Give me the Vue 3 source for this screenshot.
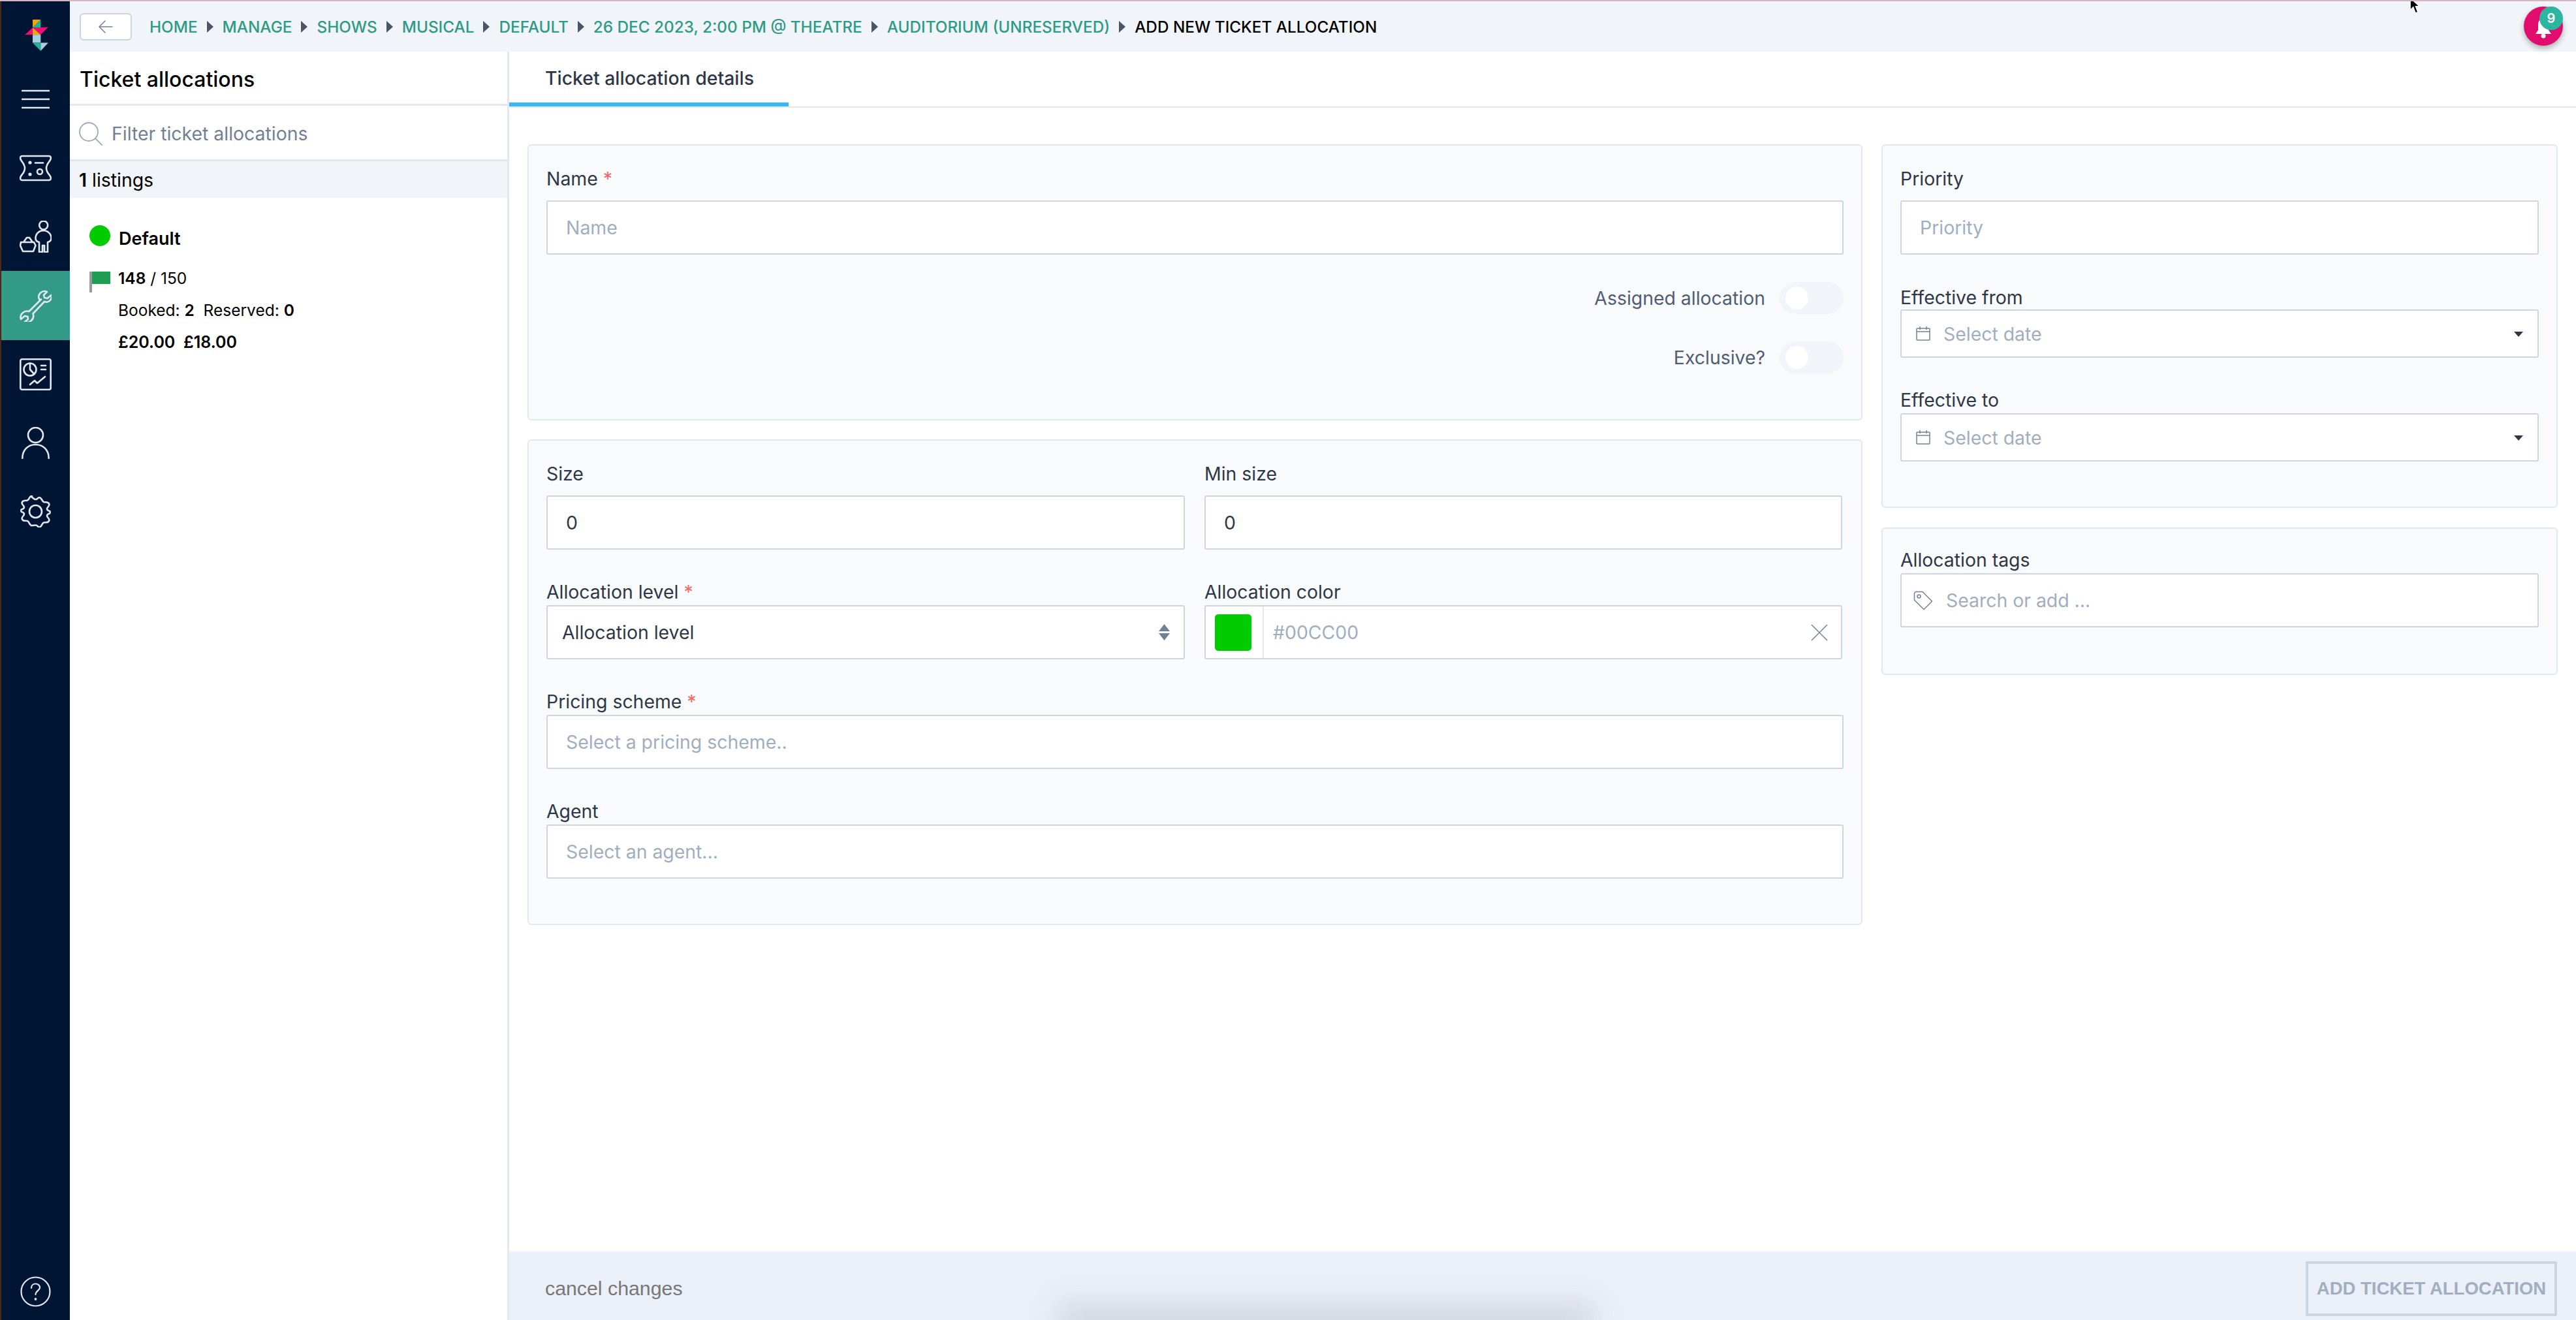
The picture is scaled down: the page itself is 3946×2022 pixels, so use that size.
<script setup>
const crumbs = ['Home', 'Manage', 'Shows', 'Musical', 'Default', '26 Dec 2023, 2:00 PM @ Theatre', 'Auditorium (Unreserved)']
</script>

<template>
  <div class="app">
    <aside class="rail">
      <svg class="logo" viewBox="110 90 108 145">
        <polygon points="146,90 183,90 146,127" fill="#f6a609" />
        <polygon points="183,90 183,127 146,127" fill="#1eb49a" />
        <polygon points="110,160 146,127 146,160" fill="#ef0f73" />
        <polygon points="146,127 218,125 183,160" fill="#ef0f73" />
        <polygon points="146,127 183,160 146,160" fill="#f6a609" />
        <polygon points="146,160 183,160 183,197 146,197" fill="#a7cfe2" />
        <polygon points="146,197 183,197 183,235" fill="#1eb49a" />
        <polygon points="183,197 218,197 183,235" fill="#a7cfe2" />
      </svg>
      <svg class="burger" viewBox="0 0 43 30" fill="none" stroke="#e2e8f0" stroke-width="2.6" stroke-linecap="round">
        <path d="M1 2h41M1 15h41M1 28h41" />
      </svg>
      <div class="nav">
        <div class="nav-item">
          <svg class="ico" viewBox="0 0 49 49" fill="none" stroke="#e2e8f0" stroke-width="2.6" stroke-linecap="round" stroke-linejoin="round">
            <path d="M4 6h41a3 3 0 0 1 3 3c0 5-7 7-7 15.500s7 10.500 7 15.500a3 3 0 0 1-3 3H4a3 3 0 0 1-3-3c0-5 7-7 7-15.500S1 14 1 9a3 3 0 0 1 3-3z" />
            <circle cx="16" cy="16" r="1.300" fill="#e2e8f0" />
            <circle cx="16" cy="34" r="1.300" fill="#e2e8f0" />
            <path d="M24 16.500h12" />
            <circle cx="31" cy="30" r="4" />
          </svg>
        </div>
        <div class="nav-item">
          <svg class="ico" viewBox="0 0 49 49" fill="none" stroke="#e2e8f0" stroke-width="2.6" stroke-linecap="round" stroke-linejoin="round">
            <circle cx="36.700" cy="7" r="6.500" />
            <path d="M36.700 15C30 15 24.500 20 24.500 27c0 3 1.500 5 5.500 6v15h5V38h3v10h5V33c4-1 5.500-3 5.500-6 0-7-5.500-12-12.800-12z" />
            <path d="M2 33h20l2.500 5-3.500 9H5L1 38zM6 33l5-7h4l5 7" />
          </svg>
        </div>
        <div class="nav-item active">
          <svg class="ico" viewBox="0 0 49 49" fill="none" stroke="#e2e8f0" stroke-width="2.6" stroke-linecap="round" stroke-linejoin="round">
            <path d="M33 14.500 14.500 33c-4-1.500-9 .500-11.500 4-1.500 2.500-2 5-1 8l6-5 4.500 1 .5 4-5 4c3 1.500 7 .500 10-2 3-3 4-7 2.500-10.500L38 18c4 1.500 8 0 10-3.500 1-2 1-4.500.5-6.500l-6 5-4.500-1-1-4 5-5c-3-1.500-7-1-10 1.500-3 3-3.500 7-1.500 10.500z" />
          </svg>
        </div>
        <div class="nav-item">
          <svg class="ico" viewBox="0 0 49 49" fill="none" stroke="#e2e8f0" stroke-width="2.6" stroke-linecap="round" stroke-linejoin="round">
            <rect x="1.300" y="1.300" width="46.400" height="46.400" rx="2.500" />
            <circle cx="16" cy="17" r="9.500" />
            <path d="M16 7.500V17l6 6.500M33 11h7M33 17h7M16 40l7-6 4 4 12-10" />
          </svg>
        </div>
        <div class="nav-item">
          <svg class="ico-u" viewBox="0 0 43 49" fill="none" stroke="#e2e8f0" stroke-width="2.6" stroke-linecap="round">
            <circle cx="21.500" cy="12.500" r="11.500" />
            <path d="M1.300 48C1.300 35 10 27 21.500 27S41.700 35 41.700 48" />
          </svg>
        </div>
        <div class="nav-item">
          <svg class="ico" viewBox="0 0 49 49" fill="none" stroke="#e2e8f0" stroke-width="2.6" stroke-linecap="round" stroke-linejoin="round">
            <circle cx="24.500" cy="24.500" r="9.500" />
            <path d="M19 3c2 0 2 3 5.500 3S28 3 30 3c4 0 4 6 7 7s6-1 8 2.500-3 5-3 8c0 2 1 2.500 4 3.500 1 .5 1 3 0 3.500-3 1-4 1.500-4 3.500 0 3 5 4.500 3 8s-5 1.500-8 2.500-3 7-7 7c-2 0-2.500-3-5.500-3S21 46 19 46c-4 0-4-6-7-7s-6 1-8-2.500 3-5 3-8c0-2-1-2.500-4-3.500-1-.5-1-3 0-3.500 3-1 4-1.500 4-3.500 0-3-5-4.500-3-8s5-1.500 8-2.500 3-7 7-7z" />
          </svg>
        </div>
      </div>
      <svg class="help" viewBox="0 0 47 47" fill="none" stroke="#e2e8f0" stroke-width="2.200" stroke-linecap="round">
        <circle cx="23.500" cy="23.500" r="22" />
        <path d="M17 18c0-4 3-6.500 6.500-6.500S30 14 30 17.500c0 4-6.500 5-6.500 10.500" />
        <circle cx="23.500" cy="35" r=".8" />
      </svg>
    </aside>

    <div class="main">
      <header class="topbar">
        <button class="back">
          <svg viewBox="0 0 22 20" fill="none" stroke="#718096" stroke-width="1.500" stroke-linecap="round" stroke-linejoin="round">
            <path d="M21 10H1M10 1l-9 9 9 9" />
          </svg>
        </button>
        <nav class="crumbs">
          <template v-for="c in crumbs" :key="c">
            <a class="crumb">{{ c }}</a>
            <i class="sep"></i>
          </template>
          <span class="crumb last">Add new ticket allocation</span>
        </nav>
        <div class="bell">
          <svg viewBox="0 0 30 34">
            <path d="M15 2c-5 0-8 4-8 10v8l-4 6h24l-4-6v-8c0-6-3-10-8-10z" fill="#fff" />
            <circle cx="15" cy="29" r="3.500" fill="#fff" />
          </svg>
          <span class="badge">9</span>
        </div>
        <svg class="cursor" viewBox="0 0 14 22">
          <path d="M1 0v16l4-4 3 8 3-1-3-8h5z" fill="#000" stroke="#fff" stroke-width="1" />
        </svg>
      </header>

      <div class="body">
        <section class="list">
          <h2 class="list-title">Ticket allocations</h2>
          <div class="filter">
            <svg viewBox="0 0 36 36" fill="none" stroke="#a0aec0" stroke-width="2" stroke-linecap="round">
              <circle cx="15" cy="15" r="14" />
              <path d="M25 25l10 10" />
            </svg>
            <span>Filter ticket allocations</span>
          </div>
          <div class="count"><b>1</b> listings</div>
          <div class="entry">
            <div class="entry-head"><i class="dot"></i><b>Default</b></div>
            <div class="entry-row nums">
              <span class="flag"></span>
              <span><em>148</em> / 150</span>
            </div>
            <div class="entry-row indent">Booked: <em>2</em>&nbsp; Reserved: <em>0</em></div>
            <div class="entry-row indent"><em class="price">£20.00&nbsp; £18.00</em></div>
          </div>
        </section>

        <section class="detail">
          <div class="tabs"><div class="tab">Ticket allocation details</div></div>
          <div class="form">
            <div class="col-left">
              <div class="panel panel-name">
                <div class="lab lab-first">Name <span class="req">*</span></div>
                <div class="inp ph">Name</div>
                <div class="switch-row"><span>Assigned allocation</span><i class="switch"><i></i></i></div>
                <div class="switch-row"><span>Exclusive?</span><i class="switch"><i></i></i></div>
              </div>
              <div class="panel panel-main">
                <div class="two">
                  <div>
                    <div class="lab lab-first">Size</div>
                    <div class="inp val">0</div>
                  </div>
                  <div>
                    <div class="lab lab-first">Min size</div>
                    <div class="inp val">0</div>
                  </div>
                </div>
                <div class="two row-gap">
                  <div>
                    <div class="lab">Allocation level <span class="req">*</span></div>
                    <div class="inp sel">
                      <span>Allocation level</span>
                      <svg viewBox="0 0 17 25" fill="#718096"><path d="M8.500 0 17 11H0zM8.500 25 0 14h17z" /></svg>
                    </div>
                  </div>
                  <div>
                    <div class="lab">Allocation color</div>
                    <div class="inp color">
                      <span class="swatch-cell"><i class="swatch"></i></span>
                      <span class="hex">#00CC00</span>
                      <svg viewBox="0 0 26 26" fill="none" stroke="#718096" stroke-width="1.500"><path d="M1 1l24 24M25 1 1 25" /></svg>
                    </div>
                  </div>
                </div>
                <div class="row-gap">
                  <div class="lab">Pricing scheme <span class="req">*</span></div>
                  <div class="inp ph">Select a pricing scheme..</div>
                </div>
                <div class="row-gap">
                  <div class="lab">Agent</div>
                  <div class="inp ph">Select an agent...</div>
                </div>
              </div>
            </div>

            <div class="col-right">
              <div class="panel panel-dates">
                <div class="lab lab-first">Priority</div>
                <div class="inp ph">Priority</div>
                <div class="lab from">Effective from</div>
                <div class="inp date">
                  <svg viewBox="0 0 22 22" fill="none" stroke="#718096" stroke-width="1.500"><rect x="1" y="3" width="20" height="18" rx="1" /><path d="M1 8h20M6 0v5M16 0v5" /></svg>
                  <span>Select date</span>
                  <i class="caret"></i>
                </div>
                <div class="lab to">Effective to</div>
                <div class="inp date">
                  <svg viewBox="0 0 22 22" fill="none" stroke="#718096" stroke-width="1.500"><rect x="1" y="3" width="20" height="18" rx="1" /><path d="M1 8h20M6 0v5M16 0v5" /></svg>
                  <span>Select date</span>
                  <i class="caret"></i>
                </div>
              </div>
              <div class="panel panel-tags">
                <div class="lab tags-lab">Allocation tags</div>
                <div class="inp tags">
                  <svg viewBox="0 0 30 30" fill="none" stroke="#718096" stroke-width="1.500" stroke-linejoin="round"><path d="M1.500 3.500 3.500 1.500H14l14.500 14.500-12.500 12.500L1.500 14z" /><circle cx="8.500" cy="8.500" r="2.500" /></svg>
                  <span>Search or add ...</span>
                </div>
              </div>
            </div>
          </div>
          <footer class="foot">
            <i class="foot-shade"></i>
            <span class="cancel">cancel changes</span>
            <button class="submit">ADD TICKET ALLOCATION</button>
          </footer>
        </section>
      </div>
    </div>
  </div>
</template>

<style>
html, body { margin: 0; padding: 0; background: #fff; }
</style>

<style scoped>
* { box-sizing: border-box; }
.app {
  width: 3946px; height: 2022px; display: flex; overflow: hidden;
  font-family: Inter, "Noto Sans", sans-serif; font-size: 28.4px; color: #2d3748;
  border-top: 2px solid #cfb6c0; position: relative;
}
.rail {
  width: 107px; flex: none; background: #001433; border-left: 2px solid #4a2a1c;
  display: flex; flex-direction: column; align-items: center; padding-top: 28px;
}
.logo { width: 36px; height: 48px; display: block; margin-left: 3px; }
.burger { width: 43px; height: 30px; margin-top: 59px; display: block; }
.nav { margin-top: 38px; width: 100%; display: flex; flex-direction: column; }
.nav-item { height: 105px; display: flex; align-items: center; justify-content: center; }
.nav-item.active { background: #339a87; height: 106px; }
.ico { width: 49px; height: 49px; display: block; }
.ico-u { width: 43px; height: 49px; display: block; }
.help { width: 47px; height: 47px; margin-top: auto; margin-bottom: 20px; display: block; }

.main { flex: 1; min-width: 0; display: flex; flex-direction: column; }
.topbar {
  height: 77px; flex: none; background: #f1f5f9; display: flex; align-items: center;
  padding-left: 15px; position: relative;
}
.back {
  width: 80px; height: 42px; background: #fff; border: 2px solid #cbd5e0; border-radius: 6px;
  display: flex; align-items: center; justify-content: center; padding: 0;
}
.back svg { width: 22px; height: 20px; display: block; }
.crumbs { display: flex; align-items: center; margin-left: 27px; }
.crumb {
  font-size: 24.300px; font-weight: 500; text-transform: uppercase; color: #2f9a85; white-space: nowrap;
}
.crumb.last { color: #000; }
.sep {
  width: 0; height: 0; margin: 0 14px; border-left: 10px solid #4a5568;
  border-top: 9px solid transparent; border-bottom: 9px solid transparent; display: block;
}
.bell {
  position: absolute; left: 3759px; top: 8px; width: 60px; height: 60px; border-radius: 50%;
  background: #e20c6f; box-shadow: 0 4px 8px rgba(0,0,0,.3);
}
.bell svg { position: absolute; left: 15px; top: 16px; width: 30px; height: 34px; }
.badge {
  position: absolute; left: 24px; top: 0; width: 36px; height: 36px; border-radius: 50%;
  background: #2cb5a0; color: #fff; font-size: 20px; font-weight: 600;
  display: flex; align-items: center; justify-content: center;
}
.cursor { position: absolute; left: 3583px; top: -5px; width: 18px; height: 25px; }

.body { flex: 1; min-height: 0; display: flex; }
.list { width: 673px; flex: none; border-right: 3px solid #e2e8f0; color: #000; }
.list-title {
  height: 83px; margin: 0; padding: 5px 0 0 15px; display: flex; align-items: center;
  font-size: 32px; font-weight: 500; border-bottom: 3px solid #e2e8f0;
}
.filter {
  height: 85px; padding: 3px 0 0 14px; display: flex; align-items: center; gap: 14px;
  font-size: 28.4px; color: #718096; border-bottom: 3px solid #e2e8f0;
}
.filter svg { width: 36px; height: 36px; display: block; }
.count {
  height: 56px; padding: 1px 0 0 14px; background: #f1f5f9; display: flex; align-items: center;
  font-size: 28.4px; white-space: pre;
}
.count b { font-weight: 600; }
.entry { padding: 42px 0 0 30px; }
.entry-head { display: flex; align-items: center; height: 32px; gap: 13px; }
.entry-head b { font-size: 27px; font-weight: 600; position: relative; top: 4px; }
.dot { width: 32px; height: 32px; border-radius: 50%; background: #00cc00; display: block; }
.entry-row { font-size: 24.500px; height: 49px; display: flex; align-items: center; white-space: pre; }
.entry-row em { font-style: normal; font-weight: 600; }
.price { font-size: 25px; }
.nums { margin-top: 37px; height: 36px; gap: 12px; align-items: flex-start; line-height: 24px; }
.indent { padding-left: 44px; }
.flag {
  width: 32px; height: 32px; display: block; border-left: 4px solid #999; margin-top: 2px;
  background: linear-gradient(#1f9d55 0, #1f9d55 19px, transparent 19px);
}

.detail { flex: 1; min-width: 0; display: flex; flex-direction: column; }
.tabs { height: 86px; flex: none; border-bottom: 2px solid #e2e8f0; }
.tab {
  width: 428px; height: 84px; border-bottom: 6px solid #3ab7fb; padding: 2px 0 0 55px;
  display: flex; align-items: center; font-size: 28.4px; font-weight: 500; color: #2d3748;
}
.form { flex: 1; min-height: 0; display: flex; padding: 56px 28px 0 28px; gap: 29px; }
.col-left { width: 2045px; flex: none; display: flex; flex-direction: column; gap: 29px; }
.col-right { flex: 1; min-width: 0; display: flex; flex-direction: column; gap: 30px; }
.panel {
  background: #f8fafc; border: 2px solid #e2e8f0; border-radius: 6px; padding: 0 27px;
}
.panel-name { height: 423px; }
.panel-main { height: 744px; }
.panel-dates { height: 557px; }
.panel-tags { height: 226px; }
.lab { font-size: 28.4px; color: #2d3748; line-height: 36px; height: 36px; white-space: nowrap; }
.lab-first { margin-top: 33px; margin-bottom: 15px; }
.req { color: #f56565; }
.inp {
  height: 83px; background: #fff; border: 2px solid #cfd5df; border-radius: 3px;
  display: flex; align-items: center; padding: 0 28px; font-size: 28.4px; white-space: nowrap;
}
.ph { color: #a0aec0; }
.val { color: #2d3748; }
.switch-row {
  display: flex; justify-content: flex-end; align-items: center; gap: 22px; color: #4f5d75;
  height: 49px; margin-top: 42px;
}
.switch {
  width: 98px; height: 49px; border-radius: 25px; background: #f1f5f9; display: flex;
  align-items: center; padding-left: 9px;
}
.switch i { width: 35px; height: 35px; border-radius: 50%; background: #fff; display: block; }
.two { display: grid; grid-template-columns: 978px 977px; column-gap: 30px; }
.row-gap { margin-top: 47px; }
.two.row-gap { margin-top: 47px; }
.lab + .inp { margin-top: 2px; }
.lab-first + .inp { margin-top: 0; }
.sel { justify-content: space-between; padding: 0 21px 0 22px; color: #2d3748; }
.sel svg { width: 17px; height: 25px; display: block; }
.color { padding: 0 20px 0 0; }
.swatch-cell {
  width: 89px; height: 100%; display: flex; align-items: center; justify-content: flex-end;
  padding-right: 17px; border-right: 2px solid #e2e8f0; flex: none;
}
.swatch { width: 56px; height: 56px; background: #00cc00; border-radius: 5px; display: block; }
.hex { color: #a0aec0; flex: 1; padding-left: 14px; }
.color svg { width: 26px; height: 26px; display: block; }
.from { margin-top: 48px; }
.from + .inp { margin-top: 0; }
.to { margin-top: 47px; }
.date { height: 74px; padding: 0 22px 0 22px; color: #a0aec0; gap: 20px; }
.date svg { width: 22px; height: 22px; display: block; }
.date span { flex: 1; }
.caret {
  width: 0; height: 0; border-top: 8px solid #2d3748; border-left: 7px solid transparent;
  border-right: 7px solid transparent; display: block; margin-top: 2px;
}
.tags-lab { margin-top: 30px; }
.tags { padding: 0 0 0 18px; color: #a0aec0; gap: 20px; }
.tags svg { width: 30px; height: 30px; display: block; }

.foot {
  height: 106px; flex: none; margin-top: auto; background: #ebeff8; border-top: 2px solid #f1f5f9;
  display: flex; align-items: center; justify-content: space-between; padding: 0 29px 0 55px;
  position: relative; overflow: hidden;
}
.foot-shade {
  position: absolute; left: 840px; bottom: -26px; width: 820px; height: 50px;
  background: rgba(30, 40, 70, .13); filter: blur(22px);
}
.cancel {
  font-family: "Liberation Sans", sans-serif; font-size: 30.300px; color: #777; margin-top: 8px;
  position: relative;
}
.submit {
  width: 385px; height: 84px; background: transparent; border: 4px solid #cbd5e0; border-radius: 2px;
  font-family: "Liberation Sans", sans-serif; font-size: 27.500px; font-weight: 700; color: #a0aec0; padding: 0;
  white-space: nowrap; margin-top: 8px; position: relative;
}
</style>
